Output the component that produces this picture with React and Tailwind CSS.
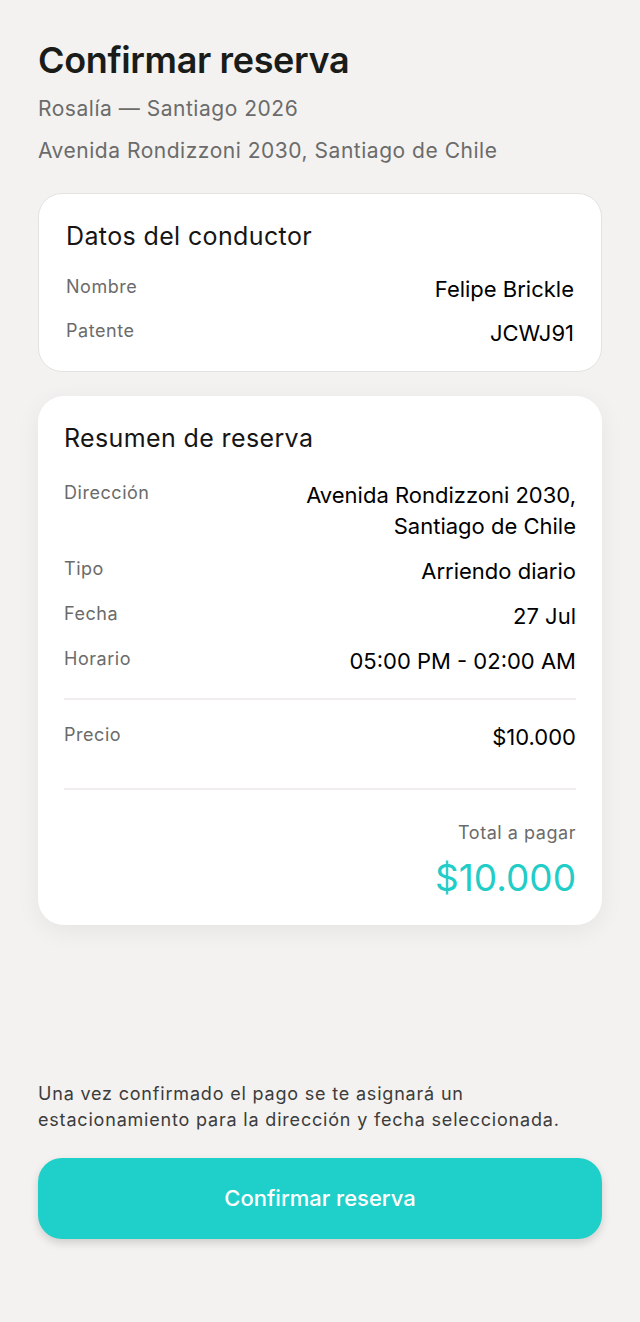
export default function App() {
  const font = { fontFamily: 'Inter, "Noto Sans", sans-serif' };
  const Row = ({ label, children }) => (
    <div className="flex justify-between items-start">
      <span className="text-[18px] leading-[26px] text-[#6b6b6b] tracking-[0.03em]">{label}</span>
      <span className="text-[22px] leading-[31px] text-black text-right max-w-[290px]">{children}</span>
    </div>
  );
  return (
    <div style={font} className="min-h-[1322px] bg-[#f3f2f0] flex flex-col px-[38px] pt-[36px] pb-[83px]">
      <h1 className="text-[36px] leading-[48px] font-semibold text-[#1a1c1a] tracking-[-0.01em]">Confirmar reserva</h1>
      <p className="mt-[11px] text-[21px] leading-[28px] text-[#6b6b6b] tracking-[0.025em]">Rosalía — Santiago 2026</p>
      <p className="mt-[14px] text-[21px] leading-[28px] text-[#6b6b6b] tracking-[0.025em]">Avenida Rondizzoni 2030, Santiago de Chile</p>

      <div className="mt-[28px] bg-white border border-[#e4e3e1] rounded-[24px] px-[27px] pt-[26px] pb-[22px]">
        <h2 className="text-[25px] leading-[32px] text-[#151515] tracking-[0.015em]">Datos del conductor</h2>
        <div className="mt-[22px] flex flex-col gap-[13px]">
          <Row label="Nombre">Felipe Brickle</Row>
          <Row label="Patente">JCWJ91</Row>
        </div>
      </div>

      <div className="mt-[24px] bg-white rounded-[26px] px-[26px] pt-[26px] pb-[23px] shadow-[0_6px_24px_rgba(0,0,0,0.06)]">
        <h2 className="text-[25px] leading-[32px] text-[#151515] tracking-[0.015em]">Resumen de reserva</h2>
        <div className="mt-[26px] flex flex-col gap-[14px]">
          <Row label="Dirección">Avenida Rondizzoni 2030, Santiago de Chile</Row>
          <Row label="Tipo">Arriendo diario</Row>
          <Row label="Fecha">27 Jul</Row>
          <Row label="Horario">05:00 PM - 02:00 AM</Row>
        </div>
        <div className="mt-[21px] border-t-2 border-[#efeeec]" />
        <div className="pt-[22px] pb-[35px]">
          <Row label="Precio">$10.000</Row>
        </div>
        <div className="border-t-2 border-[#efeeec]" />
        <div className="pt-[30px] flex flex-col items-end">
          <span className="text-[18px] leading-[26px] text-[#6b6b6b] tracking-[0.03em]">Total a pagar</span>
          <span className="mt-[8px] text-[37px] leading-[48px] text-[#22cdc7] font-normal">$10.000</span>
        </div>
      </div>

      <div className="flex-1" />

      <p className="text-[18px] leading-[26px] text-[#3c3c3c] tracking-[0.045em]">
        Una vez confirmado el pago se te asignará un
        <br />
        estacionamiento para la dirección y fecha seleccionada.
      </p>
      <button className="mt-[25px] h-[81px] w-full rounded-[24px] bg-[#1fcfc9] text-white text-[22px] font-medium shadow-[0_4px_8px_rgba(0,0,0,0.15)]">
        Confirmar reserva
      </button>
    </div>
  );
}
